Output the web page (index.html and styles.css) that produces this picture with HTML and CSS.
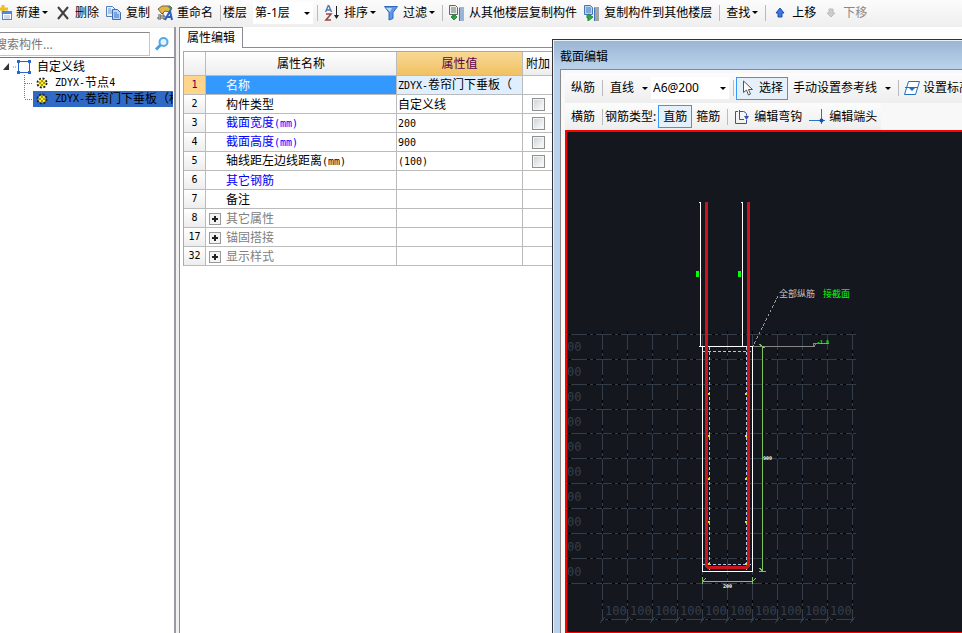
FILE: index.html
```html
<!DOCTYPE html>
<html lang="zh-CN">
<head>
<meta charset="utf-8">
<title>属性编辑</title>
<link rel="stylesheet" href="styles.css">
</head>
<body>
<div class="app">
  <header class="toolbar main-bar">
    <button class="tool"><svg class="ico" viewBox="0 0 16 16"><path d="M7 0v9M3 4h9" stroke="#f0c020" stroke-width="3"/><rect x="6.500" y="6.500" width="9" height="8" fill="#fff" stroke="#5b85bd"/><path d="M7 8h8" stroke="#4d8de0" stroke-width="2"/><path d="M8 11h6M8 13h6" stroke="#9cb8dc"/></svg>新建<i class="caret"></i></button>
    <button class="tool"><svg class="ico" viewBox="0 0 16 16"><path d="M3 2l10 12M13 2L3 14" stroke="#404040" stroke-width="2" fill="none"/></svg>删除</button>
    <button class="tool"><svg class="ico" viewBox="0 0 16 16"><path d="M.5 1.500h6l3 3v7h-9z" fill="#e6f0fb" stroke="#5680ba"/><path d="M2 4h3M2 6h4M2 8h4" stroke="#6a98d8"/><path d="M6.500 4.500h5l3 3v7h-8z" fill="#b9d3f6" stroke="#3f6db5"/><path d="M8 8h3M8 10h5M8 12h5" stroke="#3f72c0"/></svg>复制</button>
    <button class="tool"><svg class="ico" viewBox="0 0 16 16"><path d="M1 4l4-3h8l2 2-2 4-5-1-3 3z" fill="#e3b64c" stroke="#7c6530"/><path d="M10 1h4v4z" fill="#4f8b66"/><path d="M1 10h3v4H1v-2h3M6 8v6h2v-3H6" stroke="#555" fill="none"/><path d="M8 15l5-9 2 9M10 12h4" stroke="#2962bd" stroke-width="2" fill="none"/></svg>重命名</button>
    <span class="sep"></span>
    <label for="floor">楼层</label>
    <span class="combo floor"><select id="floor"><option>第-1层</option></select></span>
    <span class="sep"></span>
    <button class="tool"><svg class="ico" viewBox="0 0 16 16"><path d="M1.500 7L4.500 0l3 7M2.500 5h4" stroke="#5475b5" stroke-width="1.400" fill="none"/><path d="M2 9h5l-5 6h5" stroke="#a04444" stroke-width="1.600" fill="none"/><path d="M12.500 1v12" stroke="#222"/><path d="M10 10h5l-2.500 4z" fill="#222"/></svg>排序<i class="caret"></i></button>
    <button class="tool"><svg class="ico" viewBox="0 0 16 16"><path d="M1.500 1.500h13L10 7.500v6L6 15V7.500z" fill="#5d97e5" stroke="#3269ba"/><path d="M3 3h6L7 7z" fill="#b8d5fa"/></svg>过滤<i class="caret"></i></button>
    <span class="sep"></span>
    <button class="tool"><svg class="ico" viewBox="0 0 16 16"><path d="M.5.5h6l2 2v7h-8z" fill="#eee" stroke="#666"/><path d="M2 3h5M2 5h5M2 7h5" stroke="#777"/><path d="M5 9v3H2M2 12l3-3 3 3-3 3z" stroke="#228c36" fill="#35a846"/><path d="M10 3h5M10 5h5M10 7h5M10 9h5M10 11h5M10 13h5M10 15h5" stroke="#3e75bb"/><path d="M10.500 3v13" stroke="#3e75bb"/></svg>从其他楼层复制构件</button>
    <button class="tool"><svg class="ico" viewBox="0 0 16 16"><path d="M.5.5h6l2 2v7h-8z" fill="#b9d4f6" stroke="#4876b8"/><path d="M2 3h5M2 5h5M2 7h5" stroke="#4876b8"/><path d="M3 10v3h2M4 9l5 3-5 4z" stroke="#228c36" fill="#35a846"/><path d="M10 3h5M10 5h5M10 7h5M10 9h5M10 11h5M10 13h5M10 15h5" stroke="#555"/><path d="M10.500 3v13" stroke="#3e75bb"/></svg>复制构件到其他楼层</button>
    <span class="sep"></span>
    <button class="tool">查找<i class="caret"></i></button>
    <span class="sep"></span>
    <button class="tool"><svg class="ico" viewBox="0 0 16 16"><path d="M8 3l4 5h-2v4H6V8H4z" fill="#3d76e0" stroke="#234fa8"/></svg>上移</button>
    <button class="tool" disabled><svg class="ico" viewBox="0 0 16 16"><path d="M6 4h4v4h2l-4 4-4-4h2z" fill="#ccc" stroke="#bbb"/></svg>下移</button>
  </header>

  <main class="work">
    <aside class="side">
      <div class="search">
        <input type="text" aria-label="搜索构件" placeholder="搜索构件...">
        <button class="find" aria-label="搜索"><svg class="ico" viewBox="0 0 16 16"><circle cx="9.500" cy="6" r="4" fill="#e4f3fd" stroke="#55a8e5" stroke-width="2"/><path d="M6.500 9L2 13.500" stroke="#4b9fe0" stroke-width="3"/></svg></button>
      </div>
      <ul class="tree">
        <li class="root"><svg class="branch" viewBox="0 0 37 16"><path d="M9 4v7H3z" fill="#333"/><path d="M13 8h4" stroke="#888" stroke-dasharray="1 1"/><rect x="18.500" y="2.500" width="11" height="11" fill="#fff" stroke="#2a66cc"/><path d="M17 1h3v3h-3zM28 1h3v3h-3zM17 12h3v3h-3zM28 12h3v3h-3z" fill="#2a66cc"/></svg>自定义线</li>
        <li><svg class="stem" viewBox="0 0 33 16"><path d="M24.500 0v16M25 8.500h8" stroke="#777" stroke-dasharray="1 1"/></svg><span class="node"><svg class="gear" viewBox="0 0 12 12"><circle cx="6" cy="6" r="4.500" fill="none" stroke="#222" stroke-width="2" stroke-dasharray="2 1.530"/><circle cx="6" cy="6" r="3.500" fill="#ffed20"/><path d="M6 3v6M3 6h6" stroke="#554a00" stroke-dasharray="2 2"/></svg><span class="mono">ZDYX-</span>节点<span class="mono">4</span></span></li>
        <li><svg class="stem" viewBox="0 0 33 16"><path d="M24.500 0v8M25 8.500h8" stroke="#777" stroke-dasharray="1 1"/></svg><span class="node picked"><svg class="gear" viewBox="0 0 12 12"><circle cx="6" cy="6" r="4.500" fill="none" stroke="#222" stroke-width="2" stroke-dasharray="2 1.530"/><circle cx="6" cy="6" r="3.500" fill="#ffed20"/><path d="M6 3v6M3 6h6" stroke="#554a00" stroke-dasharray="2 2"/></svg><span class="mono">ZDYX-</span>卷帘门下垂板（标</span></li>
      </ul>
    </aside>

    <section class="props">
      <div class="tabs"><button class="tab">属性编辑</button><span class="tab-rest"></span></div>
      <div class="sheet">
        <table>
          <colgroup><col class="c-no"><col class="c-name"><col class="c-value"><col class="c-extra"></colgroup>
          <thead><tr><th></th><th>属性名称</th><th class="hot">属性值</th><th>附加</th></tr></thead>
          <tbody>
            <tr class="current"><th>1</th><td>名称</td><td><span class="mono">ZDYX-</span>卷帘门下垂板（</td><td></td></tr>
            <tr><th>2</th><td>构件类型</td><td>自定义线</td><td><input type="checkbox" aria-label="构件类型附加"></td></tr>
            <tr class="key"><th>3</th><td>截面宽度<span class="mono">(mm)</span></td><td class="mono">200</td><td><input type="checkbox" aria-label="截面宽度附加"></td></tr>
            <tr class="key"><th>4</th><td>截面高度<span class="mono">(mm)</span></td><td class="mono">900</td><td><input type="checkbox" aria-label="截面高度附加"></td></tr>
            <tr><th>5</th><td>轴线距左边线距离<span class="mono">(mm)</span></td><td class="mono">(100)</td><td><input type="checkbox" aria-label="轴线距离附加"></td></tr>
            <tr class="key"><th>6</th><td>其它钢筋</td><td></td><td></td></tr>
            <tr><th>7</th><td>备注</td><td></td><td></td></tr>
            <tr class="group"><th>8</th><td><button class="plus" aria-label="展开"></button>其它属性</td><td></td><td></td></tr>
            <tr class="group"><th>17</th><td><button class="plus" aria-label="展开"></button>锚固搭接</td><td></td><td></td></tr>
            <tr class="group"><th>32</th><td><button class="plus" aria-label="展开"></button>显示样式</td><td></td><td></td></tr>
          </tbody>
        </table>
      </div>
    </section>
  </main>

  <section class="window">
    <h2>截面编辑</h2>
    <div class="pane">
      <div class="toolbar">
        <button class="tool">纵筋</button>
        <span class="sep"></span>
        <button class="tool wide">直线<i class="caret"></i></button>
        <span class="combo bar"><select aria-label="钢筋规格"><option>A6@200</option></select></span>
        <span class="sep"></span>
        <button class="tool on"><svg class="ico" viewBox="0 0 16 16"><path d="M2.500 1v11.500l3-2.500 2 5 2-1-2-4.500h4z" fill="#fff" stroke="#555"/></svg>选择</button>
        <button class="tool wide">手动设置参考线<i class="caret"></i></button>
        <span class="sep"></span>
        <button class="tool level"><svg class="ico" viewBox="0 0 16 16"><path d="M4.500 1.500h11l-4 13H.5z" fill="#fff" stroke="#1d70c0"/><path d="M1 7.500h13" stroke="#1d70c0"/><path d="M5 8h6l-3 3z" fill="#1d70c0"/></svg>设置标高</button>
      </div>
      <div class="toolbar fit">
        <button class="tool">横筋</button>
        <span class="sep"></span>
        <span class="caption">钢筋类型:</span>
        <button class="tool on">直筋</button>
        <button class="tool">箍筋</button>
        <span class="sep"></span>
        <button class="tool"><svg class="ico" viewBox="0 0 16 16"><path d="M4 2.500H1.500v12h11V11M5.500 1v9.500H10M5.500 2.500h4q4 1 3 6" fill="none" stroke="#34559f"/><path d="M10 7h5l-2.500 4z" fill="#34559f"/></svg>编辑弯钩</button>
        <button class="tool"><svg class="ico" viewBox="0 0 16 16"><path d="M0 11.500h16" stroke="#2277c8"/><path d="M12.500 0v15" stroke="#2277c8"/><circle cx="12.500" cy="11.500" r="2" fill="#164fa5"/></svg>编辑端头</button>
      </div>
      <div class="canvas">
        <svg width="395" height="500" viewBox="567 132 395 500" shape-rendering="crispEdges" fill="none">
          <defs>
            <path id="rows" d="M567 334.500h289M567 359.500h289M567 384.500h289M567 409.500h289M567 433.500h289M567 458.500h289M567 483.500h289M567 508.500h289M567 533.500h289M567 558.500h289M567 583.500h289"/>
            <path id="cols" d="M602.500 331v290M627.500 331v290M652.500 331v290M677.500 331v290M702.500 331v290M727.500 331v290M752.500 331v290M777.500 331v290M802.500 331v290M827.500 331v290M852.500 331v290"/>
          </defs>
          <g stroke="#343e4b"><use href="#rows"/><use href="#cols"/><path d="M602 619.500h250"/></g>
          <g stroke="#000"><use href="#rows" stroke-dasharray="3 3 3 16" stroke-dashoffset="5"/><use href="#cols" stroke-dasharray="3 3 3 16" stroke-dashoffset="6"/><path d="M602 619.500h250" stroke-dasharray="3 3 3 16"/></g>
          <path d="M600 623l5-6M625 623l5-6M650 623l5-6M675 623l5-6M700 623l5-6M725 623l5-6M750 623l5-6M775 623l5-6M800 623l5-6M825 623l5-6M850 623l5-6" stroke="#343e4b"/>
          <g class="scale">
            <text x="605" y="615">100</text><text x="630" y="615">100</text><text x="655" y="615">100</text><text x="680" y="615">100</text><text x="705" y="615">100</text><text x="730" y="615">100</text><text x="755" y="615">100</text><text x="780" y="615">100</text><text x="805" y="615">100</text><text x="830" y="615">100</text>
            <text x="567" y="351">00</text><text x="567" y="376">00</text><text x="567" y="401">00</text><text x="567" y="426">00</text><text x="567" y="451">00</text><text x="567" y="476">00</text><text x="567" y="501">00</text><text x="567" y="526">00</text><text x="567" y="551">00</text><text x="567" y="576">00</text>
          </g>
          <rect x="702.500" y="346.500" width="50" height="225" stroke="#fff"/>
          <path d="M699 202.500h1.500v143.500H699M741 202.500h1.500v144M699 346.500h4" stroke="#fff"/>
          <path d="M709.500 347v225M746.500 347v225M703 351.500h50M703 564.500h50" stroke="#a9c9ee" stroke-dasharray="3 2"/>
          <path d="M706.500 202v362q0 3.500 3.500 3.500h35q3.500 0 3.500-3.500V202" stroke="#ca151e" stroke-width="3"/>
          <path d="M708 393h2v2h-2zM745 393h2v2h-2zM708 435h2v2h-2zM745 435h2v2h-2zM708 478h2v2h-2zM745 478h2v2h-2zM708 521h2v2h-2zM745 521h2v2h-2zM708 563h2v2h-2zM745 563h2v2h-2z" fill="#f4dc20"/>
          <path d="M696 271h3v6h-3zM738 271h3v6h-3z" fill="#0f0"/>
          <path d="M778 296L753 346" stroke="#999" stroke-dasharray="3 2"/>
          <path d="M753 346.500h61l2-3h13M813.500 346v-3h4" stroke="#858585"/>
          <path d="M762.500 347v224M759 571.500h7M759 344l6 4M759 568l4 3M702 581.500h51M702.500 577v7M752.500 577v7M702 582l4-4M752 582l4-4" stroke="#80c25c"/>
          <g class="note"><text x="779" y="297" fill="#c0c0c0">全部纵筋</text><text x="823" y="297" fill="#0f0">接截面</text></g>
          <g class="tiny"><text x="817" y="344" fill="#0f0">-1.8</text><text x="763" y="460" fill="#fff">900</text><text x="723" y="588" fill="#fff">200</text></g>
        </svg>
      </div>
    </div>
  </section>
</div>
</body>
</html>
```

FILE: styles.css
```css
* { box-sizing: border-box; }

body {
  margin: 0;
  font: 12px/16px "Noto Sans", "Noto Sans CJK SC", sans-serif;
  color: #000;
  background: #fff;
}

button, input, select { font: inherit; color: inherit; }
button { border: 0; padding: 0; background: none; }

.app {
  position: relative;
  display: flex;
  flex-direction: column;
  height: 100vh;
  overflow: hidden;
}

.mono { font-family: "DejaVu Sans Mono", monospace; font-size: 10px; }

/* Toolbars */
.toolbar {
  display: flex;
  flex: none;
  align-items: center;
  white-space: nowrap;
  background: linear-gradient(#fcfcfc, #eee);
}
.main-bar { height: 27px; padding-bottom: 2px; }
.main-bar > :first-child { margin-left: -8px; }
.toolbar > * { flex: none; }
.tool {
  display: flex;
  align-items: center;
  gap: 4px;
  height: 23px;
  padding: 0 3px 0 4px;
}
.tool:disabled { color: #888; }
.ico { width: 16px; height: 16px; flex: none; }
.caret {
  width: 6px;
  margin-left: -2px;
  border: solid transparent;
  border-width: 3px 3px 0;
  border-top-color: #000;
}
.sep { width: 1px; height: 16px; margin: 0 2px 0 4px; background: #bbb; }

.combo {
  position: relative;
  height: 22px;
  background: #fff;
}
.combo select {
  width: 100%;
  height: 100%;
  padding: 0 2px;
  border: 0;
  appearance: none;
  background: none;
}
.combo::after {
  content: "";
  position: absolute;
  top: 10px;
  right: 3px;
  border: solid transparent;
  border-width: 3px 3px 0;
  border-top-color: #000;
}
.floor { width: 60px; margin-left: 6px; }
.bar { width: 78px; }

/* Component tree */
.work { display: flex; flex: 1; min-height: 0; }
.side {
  width: 176px;
  flex: none;
  overflow: hidden;
  border-right: 2px solid #9b99a1;
}
.search {
  display: flex;
  align-items: center;
  height: 31px;
  padding-top: 3px;
  border-bottom: 1px solid #777;
  border-top: 1px solid #e8e8e8;
}
.search input {
  width: 158px;
  height: 24px;
  margin-left: -8px;
  padding: 0 2px;
  border: 1px solid #c4c4cc;
  border-top-color: #888;
}
.search input::placeholder { color: #777; }
.find { display: flex; margin-left: 4px; }
.tree { margin: 0; padding: 1px 0 0; list-style: none; }
.tree li { display: flex; height: 16px; white-space: nowrap; }
.branch { width: 37px; height: 16px; flex: none; }
.stem { width: 33px; height: 16px; flex: none; }
.node {
  display: flex;
  flex: 1;
  align-items: center;
  min-width: 0;
  overflow: hidden;
  padding-left: 3px;
  margin-right: 1px;
}
.gear { width: 12px; height: 12px; flex: none; margin-right: 7px; }
.picked { background: #316ac5; }

/* Property sheet */
.props {
  display: flex;
  flex: 1;
  flex-direction: column;
  min-width: 0;
  border-left: 3px solid #f0f0f0;
}
.tabs { display: flex; height: 21px; }
.tab {
  padding: 0 7px;
  border: 1px solid #8b8b93;
  border-bottom: 0;
}
.tab-rest { flex: 1; border-bottom: 1px solid #8b8b93; }
.sheet {
  flex: 1;
  padding: 3px 0 0 3px;
  border-left: 1px solid #8b8b93;
}
table {
  width: 371px;
  table-layout: fixed;
  border-collapse: separate;
  border-spacing: 0;
  border: solid #aaa;
  border-width: 1px 0 0 1px;
}
.c-no { width: 22px; }
.c-name { width: 191px; }
.c-value { width: 126px; }
th, td {
  height: 19px;
  padding: 1px 1px 0;
  overflow: hidden;
  white-space: nowrap;
  line-height: 16px;
  border: solid #bbb;
  border-width: 0 1px 1px 0;
}
th { font-weight: normal; background: linear-gradient(#fff, #ededed); }
thead th { height: 24px; }
thead .hot { color: #5b0050; background: linear-gradient(#f8d894, #f1c162); }
tbody th { padding: 0; font-family: "DejaVu Sans Mono", monospace; font-size: 10px; }
td:nth-child(2) { padding-left: 20px; }
td:last-child { text-align: center; }
.current th { color: #5b0050; background: #ffd48b; }
.current td:nth-child(2) { color: #fff; background: #3399ff; }
.current td:nth-child(3) { background: #e0efff; }
.key td:nth-child(2) { color: #00f; }
.group td { color: #808080; }
.group td:nth-child(2) { padding-left: 3px; }
.plus {
  width: 12px;
  height: 12px;
  margin-right: 5px;
  vertical-align: -1px;
  border: 1px solid #999;
  background:
    linear-gradient(#222, #222) center / 6px 2px no-repeat,
    linear-gradient(#222, #222) center / 2px 6px no-repeat,
    #f4f4f4;
}
td input {
  display: block;
  width: 13px;
  height: 13px;
  margin: 0 auto;
  appearance: none;
  border: 1px solid #8e8f8f;
  background: linear-gradient(135deg, #ccd0d5, #fff);
  box-shadow: inset 0 0 0 1px #f4f4f4;
}

/* Section editor window floating over the sheet */
.window {
  position: absolute;
  top: 39px;
  right: 0;
  bottom: 0;
  left: 552px;
  display: flex;
  flex-direction: column;
  overflow: hidden;
  padding-left: 7px;
  border: solid #333;
  border-width: 1px 0 0 1px;
  background: linear-gradient(#9ab4d2, #b9d1ea 27px);
  box-shadow: inset 1px 1px #e8f0f8;
}
h2 {
  height: 29px;
  margin: 0;
  font-size: 12px;
  font-weight: normal;
  line-height: 33px;
}
.pane {
  display: flex;
  flex: 1;
  flex-direction: column;
  min-height: 0;
  padding: 3px 0 0 4px;
  border: solid #888;
  border-width: 1px 0 0 1px;
  background: #f8f8f8;
}
.pane .toolbar { height: 30px; padding-left: 2px; }
.pane .fit { align-self: flex-start; height: 27px; padding-right: 1px; }
.pane .wide { gap: 10px; padding: 0 3px 0 5px; }
.pane .level { gap: 3px; padding-left: 3px; }
.caption { margin-right: 2px; }
.pane .on { gap: 2px; padding: 0 4px; border: 1px solid #3399ff; background: #e5f0fb; }
.canvas {
  flex: 1;
  min-height: 0;
  overflow: hidden;
  border: solid #f00;
  border-width: 2px 0 1px 2px;
  background: #14171e;
}
.canvas svg { display: block; }
.scale text { font: 12px "DejaVu Sans Mono", monospace; fill: #343e4b; }
.note text { font: 9px "Noto Sans CJK SC", sans-serif; }
.tiny text { font: bold 5px "DejaVu Sans Mono", monospace; }
```
